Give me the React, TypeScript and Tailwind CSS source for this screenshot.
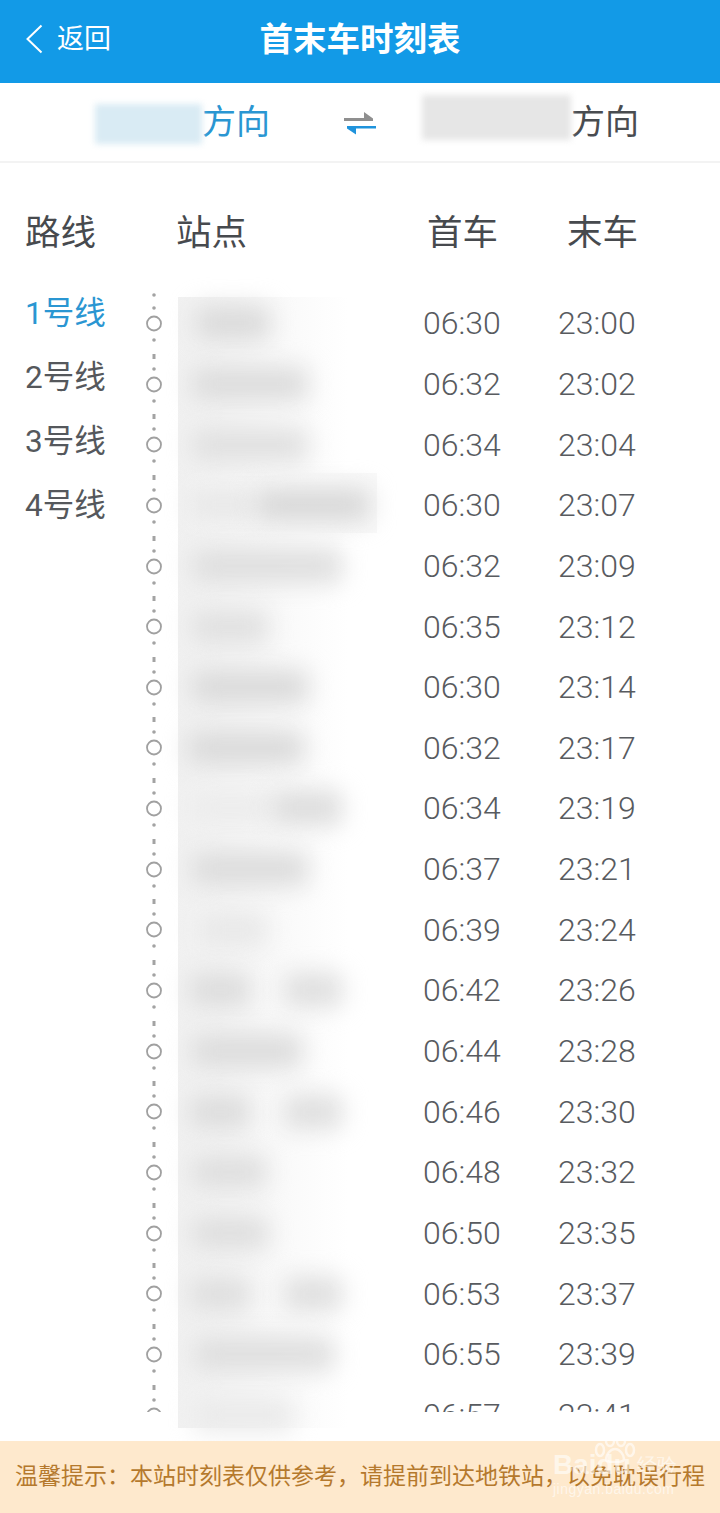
type Station = {
  first: string;
  last: string;
  blobs: string[];
};

const lines = ['1号线', '2号线', '3号线', '4号线'];

const stations: Station[] = [
  { first: '06:30', last: '23:00', blobs: ['ml-[18px] w-[74px] bg-[#dadada]'] },
  { first: '06:32', last: '23:02', blobs: ['ml-[14px] w-[116px] bg-[#dcdcdc]'] },
  { first: '06:34', last: '23:04', blobs: ['ml-[14px] w-[116px] bg-[#e0e0e0]'] },
  { first: '06:30', last: '23:07', blobs: ['ml-[12px] w-[66px] bg-[#e8e8e8]', 'w-[114px] bg-[#d8d8d8]'] },
  { first: '06:32', last: '23:09', blobs: ['ml-[14px] w-[150px] bg-[#dedede]'] },
  { first: '06:35', last: '23:12', blobs: ['ml-[14px] w-[76px] bg-[#e0e0e0]'] },
  { first: '06:30', last: '23:14', blobs: ['ml-[14px] w-[116px] bg-[#dadada]'] },
  { first: '06:32', last: '23:17', blobs: ['ml-[10px] w-[116px] bg-[#dadada]'] },
  { first: '06:34', last: '23:19', blobs: ['ml-[12px] w-[82px] bg-[#ececec]', 'w-[70px] bg-[#dcdcdc]'] },
  { first: '06:37', last: '23:21', blobs: ['ml-[14px] w-[116px] bg-[#dcdcdc]'] },
  { first: '06:39', last: '23:24', blobs: ['ml-[22px] w-[66px] bg-[#e8e8e8]'] },
  { first: '06:42', last: '23:26', blobs: ['ml-[12px] w-[60px] bg-[#dcdcdc]', 'ml-[34px] w-[58px] bg-[#dedede]'] },
  { first: '06:44', last: '23:28', blobs: ['ml-[14px] w-[110px] bg-[#dcdcdc]'] },
  { first: '06:46', last: '23:30', blobs: ['ml-[12px] w-[60px] bg-[#dcdcdc]', 'ml-[34px] w-[58px] bg-[#dedede]'] },
  { first: '06:48', last: '23:32', blobs: ['ml-[14px] w-[74px] bg-[#dedede]'] },
  { first: '06:50', last: '23:35', blobs: ['ml-[14px] w-[76px] bg-[#dedede]'] },
  { first: '06:53', last: '23:37', blobs: ['ml-[12px] w-[60px] bg-[#dedede]', 'ml-[34px] w-[58px] bg-[#dedede]'] },
  { first: '06:55', last: '23:39', blobs: ['ml-[16px] w-[140px] bg-[#dedede]'] },
  { first: '06:57', last: '23:41', blobs: ['ml-[16px] w-[100px] bg-[#eaeaea]'] },
];

function TimelineNode({ first }: { first: boolean }) {
  return (
    <svg width="16" height="61" viewBox="0 0 16 61" fill="none">
      {first ? <circle cx="8" cy="2" r="1.8" fill="#a3a3a3" /> : <rect x="6.5" y="-1" width="3" height="6" fill="#a3a3a3" />}
      <circle cx="8" cy="15" r="1.8" fill="#a3a3a3" />
      <circle cx="8" cy="30.5" r="7" stroke="#a0a0a0" strokeWidth="1.8" />
      <circle cx="8" cy="47" r="1.8" fill="#a3a3a3" />
    </svg>
  );
}

function SwapIcon() {
  return (
    <svg width="32" height="24" viewBox="0 0 32 24">
      <path d="M0 7h20V1l9 6.5V10H0z" fill="#8f8f8f" />
      <path d="M32 15H3v2.5l9 6v-6h20z" fill="#1f93dc" />
    </svg>
  );
}

function StationRow({ station, index, clipped }: { station: Station; index: number; clipped?: boolean }) {
  return (
    <div className={clipped ? 'flex h-[27.3px]' : 'flex h-[60.65px]'}>
      <div className="ml-[146px] w-[16px] shrink-0 overflow-hidden">
        <TimelineNode first={index === 0} />
      </div>
      <div className="ml-[16px] flex h-[60.65px] w-[245px] shrink-0 items-center">
        {station.blobs.map((blob, i) => (
          <div key={i} className={`h-[34px] rounded-lg blur-[12px] ${blob}`} />
        ))}
      </div>
      <div className="flex overflow-hidden">
        <div className="flex h-[60.65px] w-[135px] shrink-0 items-center text-[32px] font-light text-[#585b5f]">
          {station.first}
        </div>
        <div className="flex h-[60.65px] w-[100px] shrink-0 items-center text-[32px] font-light text-[#585b5f]">
          {station.last}
        </div>
      </div>
    </div>
  );
}

export default function App() {
  return (
    <div className="relative flex h-[1513px] w-[720px] flex-col overflow-hidden bg-white font-[Roboto,'Noto_Sans_CJK_SC',sans-serif]">
      <header className="relative flex h-[83px] shrink-0 items-center justify-center bg-[#129ae7] text-white">
        <div className="absolute left-[25px] top-[24px] flex h-[30px] items-center">
          <svg width="18" height="30" viewBox="0 0 18 30" fill="none">
            <path d="M16.5 1.5L2.5 15l14 13.5" stroke="white" strokeWidth="2" />
          </svg>
          <span className="ml-[14px] text-[27px]">返回</span>
        </div>
        <h1 className="mb-[2px] text-[33.5px] font-bold">首末车时刻表</h1>
      </header>

      <div className="flex h-[80px] shrink-0 items-center border-b-2 border-[#f3f3f3] text-[34px]">
        <div className="ml-[95px] mt-[3px] h-[40px] w-[107px] bg-[#d9ebf4] blur-[3px]" />
        <span className="mt-[1px] text-[#2a96d2]">方向</span>
        <div className="ml-[74px] mt-[1px]">
          <SwapIcon />
        </div>
        <div className="mb-[9px] ml-[46px] h-[45px] w-[149px] bg-[#e6e6e6] blur-[3px]" />
        <span className="mt-[1px] text-[#494c50]">方向</span>
      </div>

      <div className="flex h-[130px] shrink-0 items-center pt-[12px] text-[35.5px] text-[#474a4e]">
        <span className="ml-[25px]">路线</span>
        <span className="ml-[80px]">站点</span>
        <span className="ml-[180px]">首车</span>
        <span className="ml-[69px]">末车</span>
      </div>

      <div className="relative h-[1119px] shrink-0">
        <div className="absolute left-[25px] top-[-11px] flex flex-col text-[31.5px] text-[#55585c]">
          {lines.map((line, i) => (
            <div key={line} className={i === 0 ? 'flex h-[64px] items-center text-[#2a96d2]' : 'flex h-[64px] items-center'}>
              {line}
            </div>
          ))}
        </div>
        <div className="absolute left-[178px] top-[4px] h-[1131px] w-[170px] bg-gradient-to-r from-[#f1f1f1] to-white" />
        <div className="absolute left-[178px] top-[180px] h-[60px] w-[199px] bg-gradient-to-r from-transparent to-[#f9f9f9]" />
        <div className="relative">
          {stations.map((station, i) => (
            <StationRow key={station.first + station.last} station={station} index={i} clipped={i === stations.length - 1} />
          ))}
        </div>
      </div>

      <footer className="absolute bottom-0 left-0 flex h-[72px] w-[720px] items-center justify-center bg-[#fee9cd] text-[23px] text-[#b5792d]">
        <span className="whitespace-nowrap">温馨提示：本站时刻表仅供参考，请提前到达地铁站，以免耽误行程</span>
        <div className="absolute left-[553px] top-[-6px] h-[62px] w-[128px] text-white/60">
          <svg width="42" height="28" viewBox="0 0 42 28" fill="none" className="absolute left-[41px] top-0">
            <ellipse cx="6" cy="15" rx="4" ry="6" stroke="currentColor" strokeWidth="2.5" />
            <ellipse cx="16" cy="6" rx="4" ry="5" stroke="currentColor" strokeWidth="2.5" />
            <ellipse cx="27" cy="6" rx="4" ry="5" stroke="currentColor" strokeWidth="2.5" />
            <ellipse cx="36" cy="15" rx="4" ry="6" stroke="currentColor" strokeWidth="2.5" />
            <path d="M21 14c-5 0-9 6-9 10 0 3 5 3 9 3s9 0 9-3c0-4-4-10-9-10z" stroke="currentColor" strokeWidth="2.5" />
          </svg>
          <div className="absolute left-0 top-[15px] flex items-center whitespace-nowrap font-['Liberation_Sans',sans-serif] text-[28px] leading-[30px]">
            <span className="font-bold">Baidu</span>
            <span className="ml-[6px] text-[20px]">经验</span>
          </div>
          <span className="absolute left-0 top-[46px] whitespace-nowrap font-['Liberation_Sans',sans-serif] text-[14px] leading-[16px] tracking-[0.5px]">jingyan.baidu.com</span>
        </div>
      </footer>
    </div>
  );
}
